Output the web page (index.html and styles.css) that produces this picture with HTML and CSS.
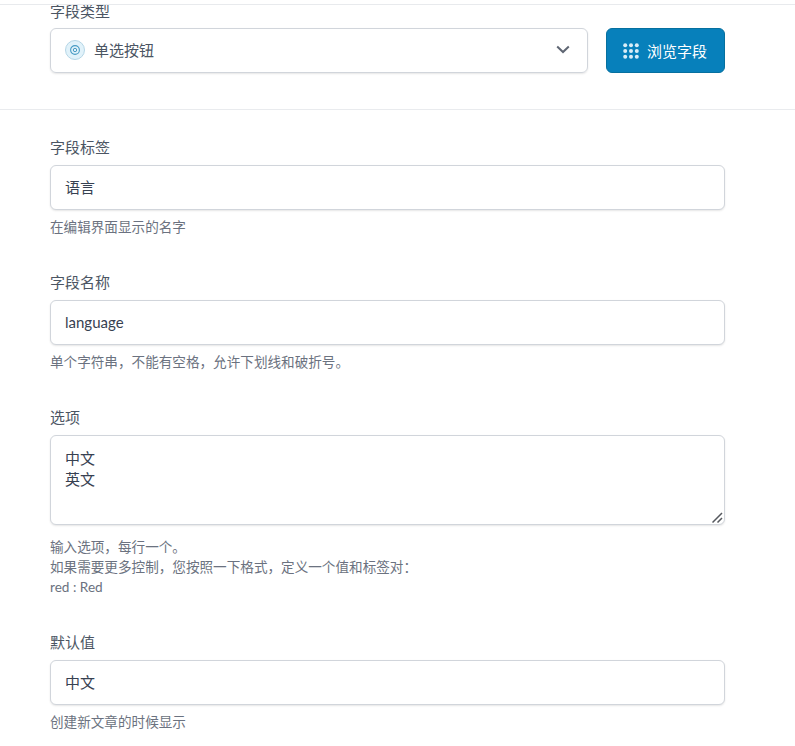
FILE: index.html
```html
<!DOCTYPE html>
<html lang="zh">
<head>
<meta charset="UTF-8">
<meta name="viewport" content="width=device-width, initial-scale=1.0">
<title>字段设置</title>
<link rel="stylesheet" href="styles.css">
</head>
<body>

<div class="topline"></div>

<section class="type-section">
  <label class="field-label">字段类型</label>
  <div class="type-row">
    <div class="select-box">
      <span class="radio-icon">
        <svg width="20" height="20" viewBox="0 0 20 20">
          <circle cx="10" cy="10" r="9.5" fill="#e1f2fa" stroke="#b5d6e6"/>
          <circle cx="10" cy="10" r="4.4" fill="none" stroke="#4a9cc4" stroke-width="1.1"/>
          <circle cx="10" cy="10" r="1.7" fill="none" stroke="#4a9cc4" stroke-width="1"/>
        </svg>
      </span>
      <span class="select-text">单选按钮</span>
      <svg class="chevron" width="14" height="9" viewBox="0 0 14 9">
        <path d="M1.2 1.5 L7 7 L12.8 1.5" fill="none" stroke="#5f6673" stroke-width="2"/>
      </svg>
    </div>
    <button class="browse-btn">
      <svg width="16" height="16" viewBox="0 0 16 16" fill="#d9edf7">
        <circle cx="2.2" cy="2.2" r="2"/><circle cx="8" cy="2.2" r="2"/><circle cx="13.8" cy="2.2" r="2"/>
        <circle cx="2.2" cy="8" r="2"/><circle cx="8" cy="8" r="2"/><circle cx="13.8" cy="8" r="2"/>
        <circle cx="2.2" cy="13.8" r="2"/><circle cx="8" cy="13.8" r="2"/><circle cx="13.8" cy="13.8" r="2"/>
      </svg>
      浏览字段
    </button>
  </div>
</section>

<section class="fields">
  <div class="field">
    <label class="field-label">字段标签</label>
    <input class="text-input" type="text" value="语言">
    <p class="help">在编辑界面显示的名字</p>
  </div>

  <div class="field">
    <label class="field-label">字段名称</label>
    <input class="text-input" type="text" value="language">
    <p class="help">单个字符串，不能有空格，允许下划线和破折号。</p>
  </div>

  <div class="field">
    <label class="field-label">选项</label>
    <div class="area-wrap">
      <textarea class="text-input text-area">中文
英文</textarea>
      <svg class="grip" width="11" height="11" viewBox="0 0 11 11">
        <path d="M0.5 10.5 L10 1 M5.5 10.5 L10 6" fill="none" stroke="#55585e" stroke-width="1.5"/>
      </svg>
    </div>
    <p class="help">输入选项，每行一个。<br>如果需要更多控制，您按照一下格式，定义一个值和标签对：<br>red : Red</p>
  </div>

  <div class="field">
    <label class="field-label">默认值</label>
    <input class="text-input" type="text" value="中文">
    <p class="help">创建新文章的时候显示</p>
  </div>
</section>

</body>
</html>
```

FILE: styles.css
```css
* {
  box-sizing: border-box;
}

html, body {
  height: 746px;
  overflow: hidden;
}

body {
  margin: 0;
  background: #fff;
  font-family: Lato, 'Noto Sans CJK SC', sans-serif;
  font-size: 15px;
  color: #374151;
}

.topline {
  position: absolute;
  top: 0;
  left: 0;
  right: 0;
  height: 5px;
  background: #fff;
  border-bottom: 1px solid #e8eaed;
}

.field-label {
  display: block;
  height: 20px;
  line-height: 20px;
  color: #4b5563;
}

.type-section {
  padding: 1px 70px 0 50px;
  height: 110px;
  border-bottom: 1px solid #e9ebee;
}

.type-row {
  display: flex;
  gap: 18px;
  margin-top: 7px;
}

.select-box {
  flex: 1;
  height: 45px;
  display: flex;
  align-items: center;
  padding: 0 17px 2px 14px;
  border: 1px solid #d1d5db;
  border-radius: 6px;
  box-shadow: 0 1px 2px rgba(0, 0, 0, 0.1);
}

.radio-icon {
  display: flex;
  margin-right: 9px;
}

.select-text {
  flex: 1;
  color: #4b5563;
}

.browse-btn {
  width: 119px;
  height: 45px;
  display: flex;
  align-items: center;
  justify-content: center;
  gap: 8px;
  padding: 0 1px 0 0;
  background: #0780bb;
  border: 1px solid #06709f;
  border-radius: 6px;
  color: #fff;
  font: inherit;
}

.fields {
  padding: 27px 70px 0 50px;
}

.field {
  margin-bottom: 35px;
}

.text-input {
  display: block;
  width: 100%;
  height: 45px;
  margin-top: 8px;
  padding: 0 14px 2px;
  background: #fff;
  border: 1px solid #d1d5db;
  border-radius: 6px;
  box-shadow: 0 1px 2px rgba(0, 0, 0, 0.1);
  font: inherit;
  color: #374151;
  outline: none;
}

.area-wrap {
  position: relative;
  margin-bottom: 12px;
}

.text-area {
  height: 90px;
  padding: 12px 14px;
  line-height: 20.5px;
  resize: none;
}

.grip {
  position: absolute;
  right: 2px;
  bottom: 2px;
}

.help {
  margin: 7px 0 0;
  font-size: 13.6px;
  line-height: 20px;
  color: #6b7280;
}
```
